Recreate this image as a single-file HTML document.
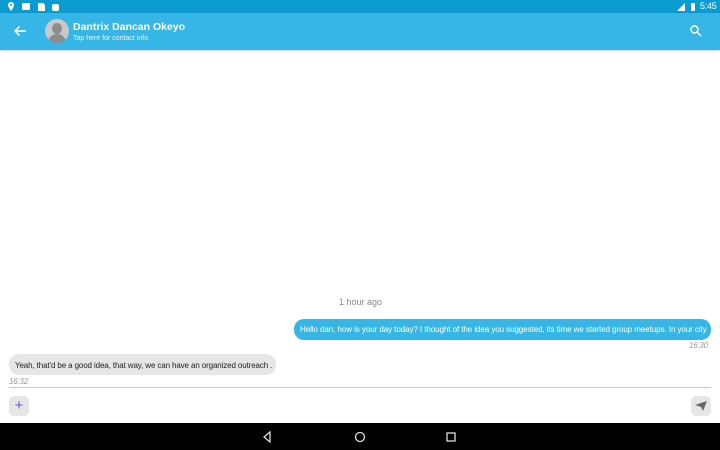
<!DOCTYPE html>
<html><head><style>
*{margin:0;padding:0;box-sizing:border-box}
body{width:720px;height:450px;position:relative;background:#fff;font-family:"Liberation Sans",sans-serif;overflow:hidden}
.abs{position:absolute}
.sb{left:0;top:0;width:720px;height:13px;background:#0b9bd0}
.tb{left:0;top:13px;width:720px;height:37px;background:#35b6e6;box-shadow:0 1px 2px rgba(0,0,0,.2)}
.t{white-space:nowrap;letter-spacing:-0.25px}
</style></head><body>
<div class="abs sb">
  <svg class="abs" style="left:7px;top:2px" width="60" height="10" viewBox="0 0 60 10" fill="#fff">
    <path d="M4 0a3 3 0 0 1 3 3c0 2-3 6-3 6S1 5 1 3a3 3 0 0 1 3-3z"/><circle cx="4" cy="3" r="1" fill="#0b9bd0"/>
    <rect x="15" y="1" width="8" height="7" rx="1"/>
    <path d="M31 1h5l2 2v6h-7z"/>
    <rect x="45" y="2" width="7" height="7" rx="2"/>
  </svg>
  <svg class="abs" style="left:676px;top:2px" width="20" height="10" fill="#fff"><path d="M1 9L9 1V9z"/><rect x="15" y="1" width="4" height="8" rx="1"/></svg>
  <div class="abs t" style="left:700px;top:1px;color:#fff;font-size:9px">5:45</div>
</div>
<div class="abs tb">
  <svg class="abs" style="left:13px;top:12px" width="14" height="12" viewBox="0 0 14 12" fill="none" stroke="#fff" stroke-width="1.5"><path d="M13 6H2M6.5 1.5L2 6l4.5 4.5"/></svg>
  <div class="abs" style="left:45px;top:6px;width:24px;height:24px;border-radius:50%;background:#c9c9c9;overflow:hidden">
    <div class="abs" style="left:7px;top:4px;width:10px;height:11px;border-radius:50%;background:#8c8c8c"></div>
    <div class="abs" style="left:3px;top:15px;width:18px;height:14px;border-radius:9px 9px 0 0;background:#8c8c8c"></div>
  </div>
  <div class="abs t" style="left:73px;top:8px;color:#fff;font-size:10.5px;font-weight:bold;letter-spacing:0">Dantrix Dancan Okeyo</div>
  <div class="abs t" style="left:73px;top:22px;color:#e8f6fc;font-size:7px;letter-spacing:0">Tap here for contact info</div>
  <svg class="abs" style="left:690px;top:12px" width="12" height="12" fill="none" stroke="#fff" stroke-width="1.5"><circle cx="4.5" cy="4.5" r="3.5"/><path d="M7 7l4 4"/></svg>
</div>
<div class="abs t" style="left:339px;top:297px;color:#888;font-size:9px;letter-spacing:0">1 hour ago</div>
<div class="abs" style="left:294px;top:319px;width:417px;height:21px;border-radius:10px;background:#35b6e6"></div>
<div class="abs t" style="left:300px;top:325px;color:#fff;font-size:8px;letter-spacing:-0.07px">Hello dan, how is your day today? I thought of the idea you suggested, its time we started group meetups. In your city</div>
<div class="abs t" style="left:689px;top:341px;color:#999;font-size:8px;font-style:italic">16:30</div>
<div class="abs" style="left:9px;top:354px;width:267px;height:21px;border-radius:10px;background:#e6e6e6"></div>
<div class="abs t" style="left:15px;top:361px;color:#222;font-size:8px;letter-spacing:-0.12px">Yeah, that'd be a good idea, that way, we can have an organized outreach .</div>
<div class="abs t" style="left:9px;top:377px;color:#999;font-size:8px;font-style:italic">16:32</div>
<div class="abs" style="left:9px;top:387px;width:702px;height:1px;background:#ccc"></div>
<div class="abs" style="left:9px;top:396px;width:20px;height:20px;border-radius:5px;background:#e6e6e6;color:#5560c8;font-size:15px;text-align:center;line-height:19px">+</div>
<div class="abs" style="left:691px;top:396px;width:20px;height:20px;border-radius:5px;background:#e6e6e6"></div>
<svg class="abs" style="left:695px;top:401px" width="12" height="10" fill="#666"><path d="M0 4L12 0 8 10 6 6z"/></svg>
<div class="abs" style="left:0;top:423px;width:720px;height:27px;background:#000"></div>
<svg class="abs" style="left:260px;top:430px" width="200" height="14" fill="none" stroke="#ddd" stroke-width="1.3">
  <path d="M10 2L4 7l6 5z"/><circle cx="100" cy="7" r="4.5"/><rect x="187" y="3" width="8" height="8"/>
</svg>
</body></html>
